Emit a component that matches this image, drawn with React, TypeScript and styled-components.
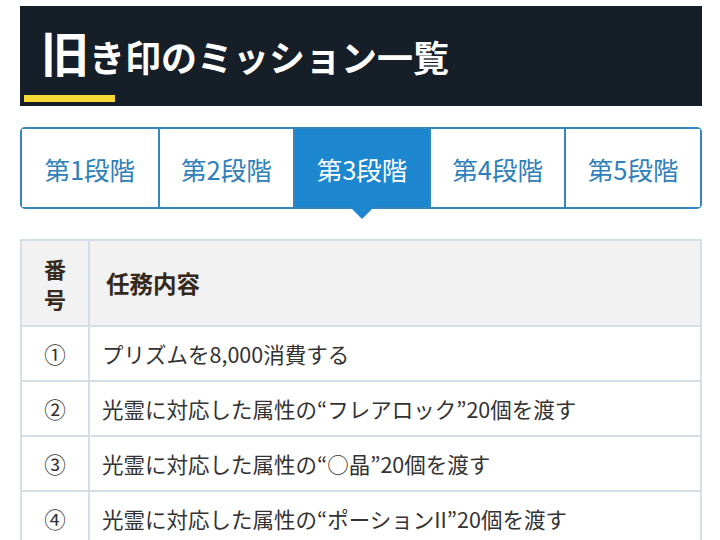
import React from "react";
import styled, { createGlobalStyle } from "styled-components";

const Global = createGlobalStyle`
  html, body { margin: 0; padding: 0; background: #ffffff; }
  body { font-family: "Noto Sans CJK JP", "Noto Sans", sans-serif; }
  * { box-sizing: border-box; }
`;

const Page = styled.div`
  width: 720px;
  padding: 6px 18px 0 20px;
`;

const Heading = styled.div`
  position: relative;
  height: 100px;
  background: #161e28;
  display: flex;
  align-items: flex-start;
  padding: 15px 0 0 21px;
`;

const Title = styled.h1`
  margin: 0;
  color: #ffffff;
  font-weight: 700;
  font-size: 36px;
  line-height: 60px;
  letter-spacing: 0;
  display: flex;
  align-items: baseline;
`;

const FirstChar = styled.span`
  font-size: 48px;
  margin-right: 0;
`;

const Accent = styled.span`
  position: absolute;
  left: 4px;
  bottom: 4px;
  width: 91px;
  height: 7px;
  background: #f8d936;
`;

const Tabs = styled.div`
  margin-top: 21px;
  display: grid;
  grid-template-columns: repeat(5, 1fr);
  border: 2px solid #3586bd;
  border-radius: 5px;
  height: 82px;
`;

const Tab = styled.div<{ $active?: boolean; $first?: boolean }>`
  position: relative;
  display: flex;
  align-items: center;
  justify-content: center;
  font-size: 25.5px;
  color: ${(p) => (p.$active ? "#ffffff" : "#2f80b9")};
  background: ${(p) => (p.$active ? "#1c86cf" : "#ffffff")};
  border-left: ${(p) => (p.$first ? "none" : "2px solid #3586bd")};
  &::after {
    content: "";
    display: ${(p) => (p.$active ? "block" : "none")};
    position: absolute;
    left: 50%;
    bottom: -12px;
    transform: translateX(-50%);
    border-left: 12px solid transparent;
    border-right: 12px solid transparent;
    border-top: 12px solid #1c86cf;
  }
`;

const Table = styled.table`
  margin-top: 30px;
  width: 682px;
  border-collapse: collapse;
  border: 2px solid #d5dee5;
`;

const Th = styled.th<{ $narrow?: boolean }>`
  background: #f2f2f2;
  border: 2px solid #d5dee5;
  color: #35291b;
  font-weight: 700;
  font-size: ${(p) => (p.$narrow ? "22px" : "23.5px")};
  line-height: 30px;
  text-align: ${(p) => (p.$narrow ? "center" : "left")};
  width: ${(p) => (p.$narrow ? "68px" : "auto")};
  padding: ${(p) => (p.$narrow ? "11px 12px" : "11px 16px")};
  height: 86px;
`;

const Td = styled.td<{ $num?: boolean }>`
  border: 2px solid #d5dee5;
  color: #333333;
  font-size: 21.5px;
  line-height: 30px;
  height: 55px;
  text-align: ${(p) => (p.$num ? "center" : "left")};
  padding: ${(p) => (p.$num ? "0" : "0 12px")};
  white-space: nowrap;
`;

const tabs = ["第1段階", "第2段階", "第3段階", "第4段階", "第5段階"];
const rows = [
  ["①", "プリズムを8,000消費する"],
  ["②", "光霊に対応した属性の“フレアロック”20個を渡す"],
  ["③", "光霊に対応した属性の“○晶”20個を渡す"],
  ["④", "光霊に対応した属性の“ポーションII”20個を渡す"],
];

export default function App() {
  return (
    <Page>
      <Global />
      <Heading>
        <Title>
          <FirstChar>旧</FirstChar>き印のミッション一覧
        </Title>
        <Accent />
      </Heading>
      <Tabs>
        {tabs.map((t, i) => (
          <Tab key={t} $active={i === 2} $first={i === 0}>
            {t}
          </Tab>
        ))}
      </Tabs>
      <Table>
        <thead>
          <tr>
            <Th $narrow>番<br />号</Th>
            <Th>任務内容</Th>
          </tr>
        </thead>
        <tbody>
          {rows.map(([n, t]) => (
            <tr key={n}>
              <Td $num>{n}</Td>
              <Td>{t}</Td>
            </tr>
          ))}
        </tbody>
      </Table>
    </Page>
  );
}
